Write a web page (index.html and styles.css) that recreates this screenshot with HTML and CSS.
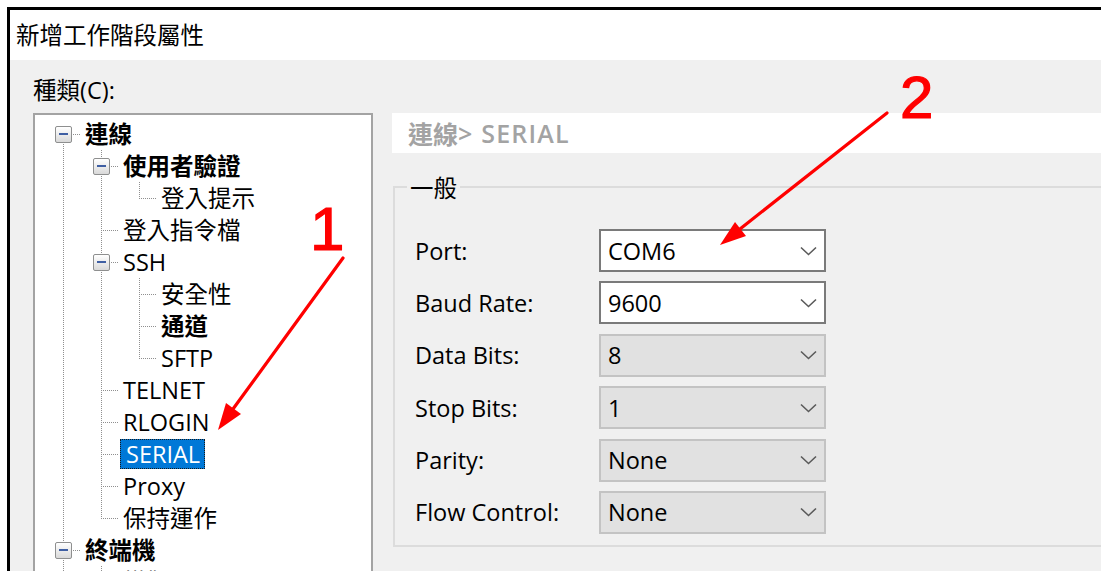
FILE: index.html
```html
<!DOCTYPE html>
<html lang="zh-Hant">
<head>
<meta charset="utf-8">
<title>新增工作階段屬性</title>
<link rel="stylesheet" href="styles.css">
</head>
<body>
<div class="window">
  <div class="titlebar">新增工作階段屬性</div>
  <div class="client">
    <div class="nav">
      <div class="nav-label">種類(C):</div>
      <div class="tree">
        <div class="node"><span class="g exp first"><span class="box"></span></span><span class="lbl b">連線</span></div>
        <div class="node"><span class="g pipe"></span><span class="g exp"><span class="box"></span></span><span class="lbl b">使用者驗證</span></div>
        <div class="node"><span class="g pipe"></span><span class="g pipe"></span><span class="g elbow"></span><span class="lbl">登入提示</span></div>
        <div class="node"><span class="g pipe"></span><span class="g tee"></span><span class="lbl">登入指令檔</span></div>
        <div class="node"><span class="g pipe"></span><span class="g exp"><span class="box"></span></span><span class="lbl">SSH</span></div>
        <div class="node"><span class="g pipe"></span><span class="g pipe"></span><span class="g tee"></span><span class="lbl">安全性</span></div>
        <div class="node"><span class="g pipe"></span><span class="g pipe"></span><span class="g tee"></span><span class="lbl b">通道</span></div>
        <div class="node"><span class="g pipe"></span><span class="g pipe"></span><span class="g elbow"></span><span class="lbl">SFTP</span></div>
        <div class="node"><span class="g pipe"></span><span class="g tee"></span><span class="lbl">TELNET</span></div>
        <div class="node"><span class="g pipe"></span><span class="g tee"></span><span class="lbl">RLOGIN</span></div>
        <div class="node"><span class="g pipe"></span><span class="g tee"></span><span class="lbl sel">SERIAL</span></div>
        <div class="node"><span class="g pipe"></span><span class="g tee"></span><span class="lbl">Proxy</span></div>
        <div class="node"><span class="g pipe"></span><span class="g elbow"></span><span class="lbl">保持運作</span></div>
        <div class="node"><span class="g exp"><span class="box"></span></span><span class="lbl b">終端機</span></div>
        <div class="node"><span class="g pipe"></span><span class="g tee"></span><span class="lbl">模擬</span></div>
      </div>
    </div>
    <div class="page">
      <div class="crumb"><span class="crumb-root">連線</span><span class="crumb-leaf">&gt; SERIAL</span></div>
      <fieldset class="group">
        <legend>一般</legend>
        <div class="fields">
          <label class="fl">Port:</label>
          <div class="combo"><span>COM6</span><svg viewBox="0 0 17 10"><polyline points="1,1.5 8.5,8.5 16,1.5"/></svg></div>
          <label class="fl">Baud Rate:</label>
          <div class="combo"><span>9600</span><svg viewBox="0 0 17 10"><polyline points="1,1.5 8.5,8.5 16,1.5"/></svg></div>
          <label class="fl">Data Bits:</label>
          <div class="combo locked"><span>8</span><svg viewBox="0 0 17 10"><polyline points="1,1.5 8.5,8.5 16,1.5"/></svg></div>
          <label class="fl">Stop Bits:</label>
          <div class="combo locked"><span>1</span><svg viewBox="0 0 17 10"><polyline points="1,1.5 8.5,8.5 16,1.5"/></svg></div>
          <label class="fl">Parity:</label>
          <div class="combo locked"><span>None</span><svg viewBox="0 0 17 10"><polyline points="1,1.5 8.5,8.5 16,1.5"/></svg></div>
          <label class="fl">Flow Control:</label>
          <div class="combo locked"><span>None</span><svg viewBox="0 0 17 10"><polyline points="1,1.5 8.5,8.5 16,1.5"/></svg></div>
        </div>
      </fieldset>
    </div>
  </div>
</div>

<!-- callout arrows drawn over the dialog -->
<svg class="callouts" viewBox="0 0 1101 571" width="1101" height="571">
  <g class="arrow">
    <line x1="343" y1="258" x2="233" y2="409"/>
    <polygon points="218,430 241,414 226,403"/>
    <line x1="887" y1="113" x2="740" y2="229"/>
    <polygon points="720,245 746,236 735,222"/>
  </g>
  <text x="310" y="250" class="num n1">1</text>
  <text x="900" y="118" class="num n2">2</text>
</svg>
</body>
</html>
```

FILE: styles.css
```css
* {
  box-sizing: border-box;
}

html,
body {
  margin: 0;
  height: 100%;
}

body {
  position: relative;
  overflow: hidden;
  background: #fff;
  color: #000;
  font-family: "Open Sans", "Noto Sans CJK TC", sans-serif;
  font-size: 23.5px;
  --dv: repeating-linear-gradient(to bottom, #8f8f8f 0 1px, transparent 1px 2px);
  --dh: repeating-linear-gradient(to right, #8f8f8f 0 1px, transparent 1px 2px);
}

/* dialog frame */
.window {
  margin: 7px 0 0 7px;
  height: calc(100% - 7px);
  border-top: 3px solid #000;
  border-left: 3px solid #000;
  display: flex;
  flex-direction: column;
  overflow: hidden;
}

.titlebar {
  flex: none;
  height: 50px;
  padding: 0 0 2px 6px;
  display: flex;
  align-items: center;
  background: #fff;
  font-family: "Noto Sans CJK TC", sans-serif;
  font-size: 23.5px;
}

.client {
  flex: 1;
  min-height: 0;
  display: flex;
  padding-left: 23px;
  background: #f0f0f0;
}

/* category tree */
.nav {
  flex: none;
  width: 340px;
  padding-top: 15px;
}

.nav-label {
  height: 30px;
  line-height: 30px;
  margin-bottom: 8px;
}

.tree {
  height: 520px;
  padding: 3px 0 0 9px;
  background: #fff;
  border: 2px solid #a3a3a3;
}

.node {
  display: flex;
  align-items: center;
  height: 32px;
}

.g {
  flex: none;
  width: 38px;
  height: 32px;
  display: flex;
  align-items: center;
}

.pipe {
  background: var(--dv) 19px 0 / 1px 100% no-repeat;
}

.tee,
.exp {
  background:
    var(--dv) 19px 0 / 1px 100% no-repeat,
    var(--dh) 19px 16px / 17px 1px no-repeat;
}

.elbow {
  background:
    var(--dv) 19px 0 / 1px 16px no-repeat,
    var(--dh) 19px 16px / 17px 1px no-repeat;
}

.exp.first {
  background:
    var(--dv) 19px 16px / 1px 16px no-repeat,
    var(--dh) 19px 16px / 17px 1px no-repeat;
}

.box {
  margin-left: 11px;
  width: 17px;
  height: 17px;
  border: 1px solid #8e8f8f;
  border-radius: 2px;
  background: linear-gradient(#ffffff, #d9d9d9);
  display: flex;
  align-items: center;
  justify-content: center;
}

.box::before {
  content: "";
  width: 9px;
  height: 2px;
  background: #3f5fa3;
}

.lbl {
  height: 30px;
  line-height: 30px;
  padding: 0 4px 0 3px;
  white-space: nowrap;
}

.lbl.b {
  font-weight: 700;
}

.lbl.sel {
  padding: 0 5px 0 6px;
  background: #0078d7;
  color: #fff;
  outline: 1px dotted #1a1a1a;
  outline-offset: -1px;
}

/* property page */
.page {
  flex: 1;
  min-width: 0;
  margin-left: 19px;
  margin-right: -40px;
  padding-top: 53px;
}

.crumb {
  height: 40px;
  padding-left: 16px;
  display: flex;
  align-items: center;
  background: #fff;
  color: #a3a3a3;
  font-size: 25px;
}

.crumb-root {
  font-weight: 700;
}

.crumb-leaf {
  font-weight: 600;
  letter-spacing: 1.2px;
}

.group {
  margin: 19px 0 0 1px;
  padding: 0 0 11px 0;
  min-width: 0;
  border: 2px solid #dcdcdc;
}

.group legend {
  margin-left: 12px;
  padding: 0 3px;
  height: 30px;
  line-height: 30px;
  font-family: "Noto Sans CJK TC", sans-serif;
}

.fields {
  display: grid;
  grid-template-columns: 184px 227px;
  grid-auto-rows: 43px;
  row-gap: 9.4px;
  padding: 27px 0 0 20px;
}

.fl {
  display: flex;
  align-items: center;
}

.combo {
  display: flex;
  align-items: center;
  justify-content: space-between;
  padding: 0 7px;
  background: #fff;
  border: 2px solid #7a7a7a;
}

.combo.locked {
  background: #e1e1e1;
  border-color: #c3c3c3;
}

.combo svg {
  width: 17px;
  height: 10px;
  fill: none;
  stroke: #5a5a5a;
  stroke-width: 1.6;
}

/* red callouts */
.callouts {
  position: absolute;
  left: 0;
  top: 0;
  pointer-events: none;
}

.arrow line {
  stroke: #ff0000;
  stroke-width: 3.2;
  stroke-linecap: round;
}

.arrow polygon {
  fill: #ff0000;
}

.num {
  fill: #ff0000;
  stroke: #ff0000;
  stroke-width: 1.2;
  font-family: "Liberation Sans", Arial, sans-serif;
}

.n1 {
  font-size: 62px;
}

.n2 {
  font-size: 60px;
}
```
